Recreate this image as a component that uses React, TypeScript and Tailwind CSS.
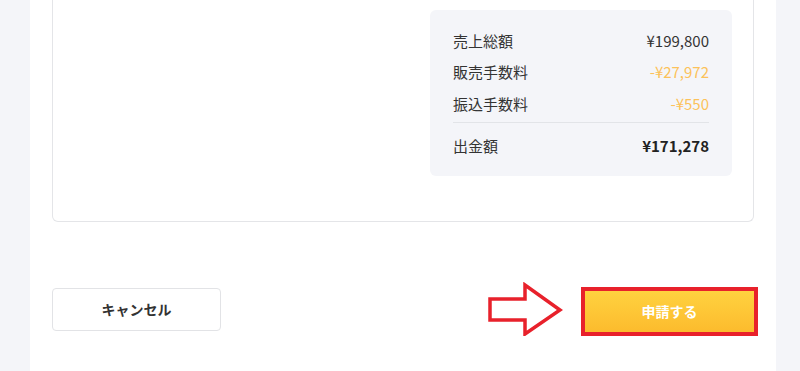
export default function App() {
  const rows = [
    { label: '売上総額', value: '¥199,800', tone: 'text-[#333]' },
    { label: '販売手数料', value: '-¥27,972', tone: 'text-[#fcc25a]' },
    { label: '振込手数料', value: '-¥550', tone: 'text-[#fcc25a]' },
  ]

  return (
    <div
      className="flex h-[371px] w-[800px] overflow-hidden bg-[#f4f5f9]"
      style={{ fontFamily: '"Noto Sans CJK JP", "Noto Sans", sans-serif' }}
    >
      <div className="ml-[30px] h-full w-[746px] shrink-0 bg-white px-[22px]">
        {/* card */}
        <div className="-mt-[10px] h-[232px] rounded-b-[6px] border border-t-0 border-[#e4e5e8] pr-[21px] pt-[20px]">
          <div className="ml-auto w-[302px] rounded-[6px] bg-[#f4f5f9] px-[23px] pb-[19px] pt-[15px] text-[15px] text-[#333]">
            {rows.map((r) => (
              <div key={r.label} className="flex h-[31.5px] items-center justify-between">
                <span>{r.label}</span>
                <span className={r.tone}>{r.value}</span>
              </div>
            ))}
            <div className="mt-[2px] border-t border-[#e2e4e8]" />
            <div className="mt-[14px] flex h-[20px] items-center justify-between">
              <span>出金額</span>
              <span className="font-bold text-[#222]">¥171,278</span>
            </div>
          </div>
        </div>

        {/* actions */}
        <div className="mt-[60px] flex items-center">
          <button className="flex h-[43px] w-[169px] shrink-0 items-center justify-center rounded-[4px] border border-[#e2e3e6] bg-white text-[14px] font-bold text-[#333]">
            キャンセル
          </button>
          <svg className="ml-[266px] shrink-0" width="76" height="54" viewBox="0 0 76 54">
            <path
              d="M3 17 H38 V3 L73 28 L38 52 V38 H3 Z"
              fill="white"
              stroke="#e8212b"
              strokeWidth="3.5"
              strokeLinejoin="miter"
            />
          </svg>
          <div className="ml-[18px] mt-[4px] shrink-0 border-[4px] border-[#e8212b]">
            <button className="flex h-[41px] w-[169px] items-center justify-center bg-gradient-to-b from-[#ffd23f] to-[#fcbb2d] text-[14px] font-bold text-white">
              申請する
            </button>
          </div>
        </div>
      </div>
    </div>
  )
}
